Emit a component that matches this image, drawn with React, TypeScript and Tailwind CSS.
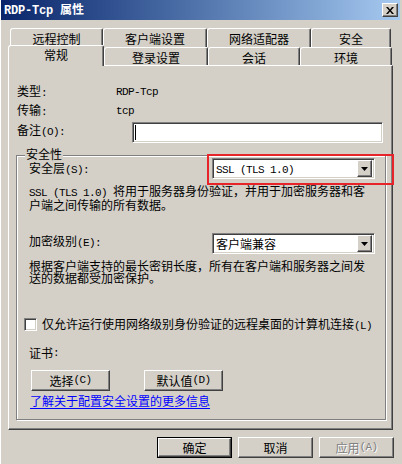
import type { ReactNode } from "react";

// classic win2k-ish bevels
const RAISED =
  "border border-t-white border-l-white border-r-[#404040] border-b-[#404040] shadow-[inset_-1px_-1px_0_#808080] bg-[#d4d0c8]";
const SUNKEN =
  "border border-t-[#808080] border-l-[#808080] border-r-white border-b-white shadow-[inset_1px_1px_0_#404040,inset_-1px_-1px_0_#d4d0c8]";

// half-width latin, like SimSun's ascii
function L({ children }: { children: ReactNode }) {
  return (
    <span className="font-[family-name:'Liberation_Mono',monospace] text-[11px] tracking-[-0.6px]">
      {children}
    </span>
  );
}

function Tab({ className, children }: { className: string; children: ReactNode }) {
  return (
    <div
      className={`flex items-center justify-center border-t border-l border-r border-t-white border-l-white border-r-[#404040] shadow-[inset_-1px_0_0_#808080] rounded-tl-[3px] rounded-tr-[2px] bg-[#d4d0c8] ${className}`}
    >
      {children}
    </div>
  );
}

function Combo({ children }: { children: ReactNode }) {
  return (
    <div className={`flex h-[21px] w-[163px] items-center bg-white p-[2px] ${SUNKEN}`}>
      <div className="flex-1 pl-[1px] leading-none">{children}</div>
      <div className={`flex h-[17px] w-[15px] items-center justify-center ${RAISED}`}>
        <svg width="7" height="4" viewBox="0 0 7 4">
          <path d="M0 0h7L3.5 4z" fill="#000" />
        </svg>
      </div>
    </div>
  );
}

function Button({ className, children }: { className: string; children: ReactNode }) {
  return (
    <div className={`flex h-[21px] items-center justify-center ${RAISED} ${className}`}>
      {children}
    </div>
  );
}

export default function App() {
  return (
    <div className="relative flex h-[464px] w-[402px] flex-col overflow-hidden border-l border-l-white bg-[#d4d0c8] font-[family-name:'Noto_Sans_CJK_SC',sans-serif] text-[12px] leading-none text-black">
      {/* title bar */}
      <div className="-ml-[1px] flex h-[20px] w-[400px] shrink-0 items-center bg-linear-to-r from-[#0a246a] to-[#a6caf0] pl-[4px]">
        <span className="font-bold text-white">
          <span className="font-[family-name:'Liberation_Mono',monospace] text-[12px] tracking-[-0.2px]">RDP-Tcp </span>
          属性
        </span>
        <div className={`ml-auto mr-[2px] flex h-[14px] w-[16px] items-center justify-center ${RAISED}`}>
          <svg width="8" height="7" viewBox="0 0 8 7">
            <path d="M0 0h2l2 2.5L6 0h2L5 3.5 8 7H6L4 4.5 2 7H0l3-3.5z" fill="#000" />
          </svg>
        </div>
      </div>

      {/* back row of tabs */}
      <div className="mt-[8px] flex h-[19px] shrink-0 pl-[9px]">
        <Tab className="h-[19px] w-[93px] pt-[2px]">远程控制</Tab>
        <Tab className="h-[19px] w-[104px] pt-[2px]">客户端设置</Tab>
        <Tab className="h-[19px] w-[104px] pt-[2px]">网络适配器</Tab>
        <Tab className="h-[19px] w-[80px] pt-[2px]">安全</Tab>
      </div>

      {/* front row of tabs */}
      <div className="relative z-10 flex h-[18px] shrink-0 items-start pl-[7px]">
        <Tab className="-mt-[2px] h-[21px] w-[96px] pb-[2px]">常规</Tab>
        <Tab className="h-[18px] w-[104px] pt-[2px]">登录设置</Tab>
        <Tab className="h-[18px] w-[92px] pt-[2px]">会话</Tab>
        <Tab className="h-[18px] w-[92px] pt-[2px]">环境</Tab>
      </div>

      {/* tab page */}
      <div className={`ml-[7px] flex h-[365px] w-[385px] shrink-0 flex-col ${RAISED}`}>
        <div className="mt-[18px] flex h-[16px] items-center pl-[8px]">
          <span className="w-[99px]">
            类型<L>:</L>
          </span>
          <L>RDP-Tcp</L>
        </div>
        <div className="mt-[3px] flex h-[16px] items-center pl-[8px]">
          <span className="w-[99px]">
            传输<L>:</L>
          </span>
          <L>tcp</L>
        </div>
        <div className="mt-[3px] flex h-[21px] items-center pl-[8px]">
          <span className="w-[115px] pb-[4px]">
            备注<L>(O):</L>
          </span>
          <div className={`flex h-[21px] w-[251px] items-center bg-white ${SUNKEN}`}>
            <span className="ml-[2px] h-[15px] w-[1px] bg-black" />
          </div>
        </div>

        {/* 安全性 group */}
        <div className="relative ml-[7px] mt-[12px] flex h-[265px] w-[370px] flex-col border border-[#808080] shadow-[inset_1px_1px_0_#fff,1px_1px_0_#fff]">
          <span className="absolute -top-[8px] left-[8px] bg-[#d4d0c8] px-[1px]">安全性</span>

          <div className="mt-[2px] flex h-[21px] items-center pl-[12px]">
            <span className="w-[183px] pt-[1px]">
              安全层<L>(S):</L>
            </span>
            <Combo>
              <L>SSL (TLS 1.0)</L>
            </Combo>
          </div>
          <p className="mt-[6px] whitespace-nowrap pl-[12px] leading-[12px]">
            <L>SSL (TLS 1.0) </L>将用于服务器身份验证，并用于加密服务器和客
            <br />
            户端之间传输的所有数据。
          </p>

          <div className="mt-[22px] flex h-[21px] items-center pl-[12px]">
            <span className="w-[183px] pb-[4px]">
              加密级别<L>(E):</L>
            </span>
            <Combo>客户端兼容</Combo>
          </div>
          <p className="mt-[6px] whitespace-nowrap pl-[12px] leading-[12px]">
            根据客户端支持的最长密钥长度，所有在客户端和服务器之间发
            <br />
            送的数据都受加密保护。
          </p>

          <div className="mt-[34px] flex h-[13px] items-center gap-[5px] pl-[7px]">
            <div className={`h-[13px] w-[13px] bg-white ${SUNKEN}`} />
            <span className="whitespace-nowrap">
              仅允许运行使用网络级别身份验证的远程桌面的计算机连接<L>(L)</L>
            </span>
          </div>

          <div className="mt-[15px] flex h-[14px] items-center pl-[12px]">
            证书<L>:</L>
          </div>

          <div className="mt-[10px] flex gap-[34px] pl-[14px]">
            <Button className="w-[79px]">
              选择<L>(C)</L>
            </Button>
            <Button className="w-[79px]">
              默认值<L>(D)</L>
            </Button>
          </div>

          <div className="mt-[3px] flex h-[14px] items-center pl-[13px]">
            <span className="text-[#0000ff] underline underline-offset-[2px]">了解关于配置安全设置的更多信息</span>
          </div>

          {/* annotation box */}
          <div className="absolute -top-[2px] left-[190px] h-[31px] w-[187px] border-2 border-[#e8242b]" />
        </div>
      </div>

      {/* dialog buttons */}
      <div className="mt-[7px] flex h-[21px] shrink-0 justify-end gap-[6px] pr-[8px]">
        <div className="h-[21px] w-[75px] border border-black">
          <div className={`flex h-full w-full items-center justify-center ${RAISED}`}>确定</div>
        </div>
        <Button className="w-[75px]">取消</Button>
        <Button className="w-[75px] text-[#808080] [text-shadow:1px_1px_0_#fff]">
          应用<L>(A)</L>
        </Button>
      </div>
    </div>
  );
}
